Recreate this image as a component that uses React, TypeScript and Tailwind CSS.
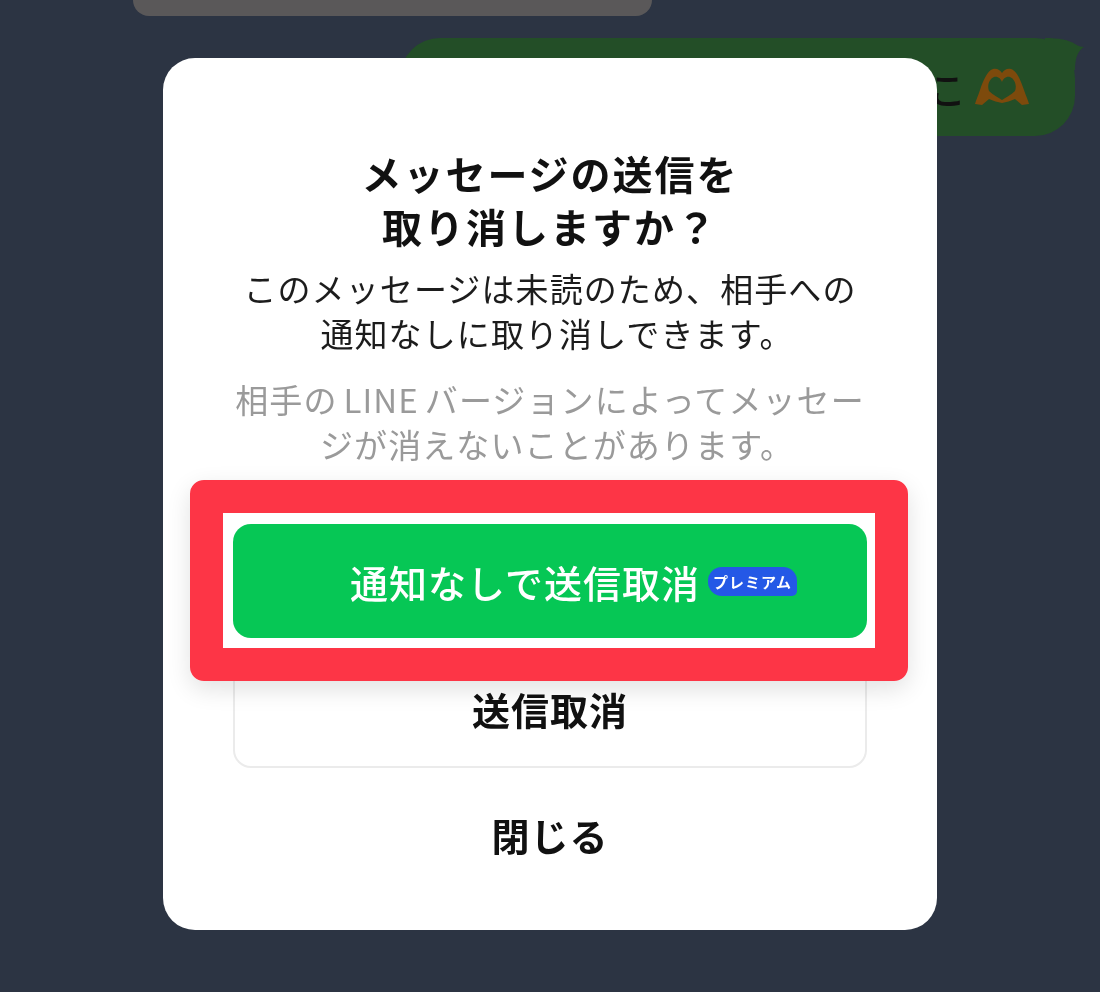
import React from 'react';

const font = '"Noto Sans CJK JP", "Noto Sans", sans-serif';

const HeartHands = () => (
    <svg width="56" height="38" viewBox="0 0 56 38" className="shrink-0">
        <path
            d="M19 1 C23 0 26 2 28 5 C30 2 33 0 37 1 C43 3 47 13 50 22 C52 28 54 32 55 36 L48 37 L41 31 C37 33 32 34 28 35 C24 34 19 33 15 31 L8 37 L1 36 C2 32 4 28 6 22 C9 13 13 3 19 1 Z M20 9 C15 11 13 18 15 23 C19 27 24 29 28 32 C32 29 37 27 41 23 C43 18 41 11 36 9 C32 8 29 11 28 14 C27 11 24 8 20 9 Z"
            fill="#7d4a0c"
            fillRule="evenodd"
        />
    </svg>
);

const PremiumBadge = () => (
    <span className="flex h-[29px] w-[89px] items-center justify-center rounded-[14px] rounded-br-[5px] bg-[#2458e6] text-[15px] leading-none font-bold text-white">
        プレミアム
    </span>
);

export default function App() {
    return (
        <div className="h-[992px] w-[1100px] overflow-hidden bg-[#2c3443]">
            <div
                className="relative h-[992px] w-[1100px] blur-[0.6px]"
                style={{ fontFamily: font }}
            >
                {/* トーク画面（背景） */}
                <div className="flex flex-col">
                    <div className="ml-[133px] h-[16px] w-[519px] rounded-b-[26px] bg-[#5a5859]" />
                    <div className="relative mt-[22px] ml-[400px] flex h-[98px] w-[675px] items-center justify-end gap-[8px] rounded-[40px] bg-[#234e27] pr-[45px] text-[38px] font-medium text-[#111]">
                        <span>こ</span>
                        <HeartHands />
                        <svg
                            width="40"
                            height="40"
                            viewBox="0 0 40 40"
                            className="absolute -top-[2px] -right-[10px]"
                        >
                            <path d="M0 2 C14 2 24 4 30 8 C33 10 36 11 39 11 C34 14 30 20 30 34 L0 34 Z" fill="#234e27" />
                        </svg>
                    </div>
                </div>

                {/* ダイアログ */}
                <div className="absolute top-[58px] left-[163px] flex h-[872px] w-[774px] flex-col items-center rounded-[32px] bg-white px-[70px] pt-[89px] text-center">
                    <h2 className="text-[40px] leading-[53px] font-bold tracking-[2px] whitespace-nowrap text-[#111]">
                        メッセージの送信を
                        <br />
                        取り消しますか？
                    </h2>
                    <p className="mt-[13px] text-[33px] leading-[45px] tracking-[1.1px] whitespace-nowrap text-[#1c1c1c]">
                        <span className="block">このメッセージは未読のため、相手への</span>
                        <span className="block pl-[14px]">通知なしに取り消しできます。</span>
                    </p>
                    <p className="mt-[21px] text-[33px] leading-[45px] tracking-[1.1px] whitespace-nowrap text-[#9a9a9a]">
                        <span className="block">
                            相手の<span className="mx-[6px]">LINE</span>バージョンによってメッセー
                        </span>
                        <span className="block pl-[14px]">ジが消えないことがあります。</span>
                    </p>
                    <button className="mt-[57px] flex h-[114px] w-[634px] shrink-0 items-center justify-center gap-[8px] rounded-[18px] bg-[#06c755] pl-[47px] text-[38px] font-medium tracking-[1px] text-white">
                        <span>通知なしで送信取消</span>
                        <PremiumBadge />
                    </button>
                    <button className="mt-[14px] h-[116px] w-[634px] shrink-0 rounded-[18px] border-2 border-[#ebebeb] pb-[3px] text-[38px] font-bold tracking-[1px] text-[#111]">
                        送信取消
                    </button>
                    <button className="mt-[32px] text-[38px] leading-[70px] font-bold tracking-[1px] text-[#111]">
                        閉じる
                    </button>
                </div>

                {/* 赤枠の注釈 */}
                <div className="absolute top-[480px] left-[190px] h-[201px] w-[718px] rounded-[14px] border-[33px] border-[#fd3546] shadow-[0_8px_24px_rgba(0,0,0,0.12)]" />
            </div>
        </div>
    );
}
